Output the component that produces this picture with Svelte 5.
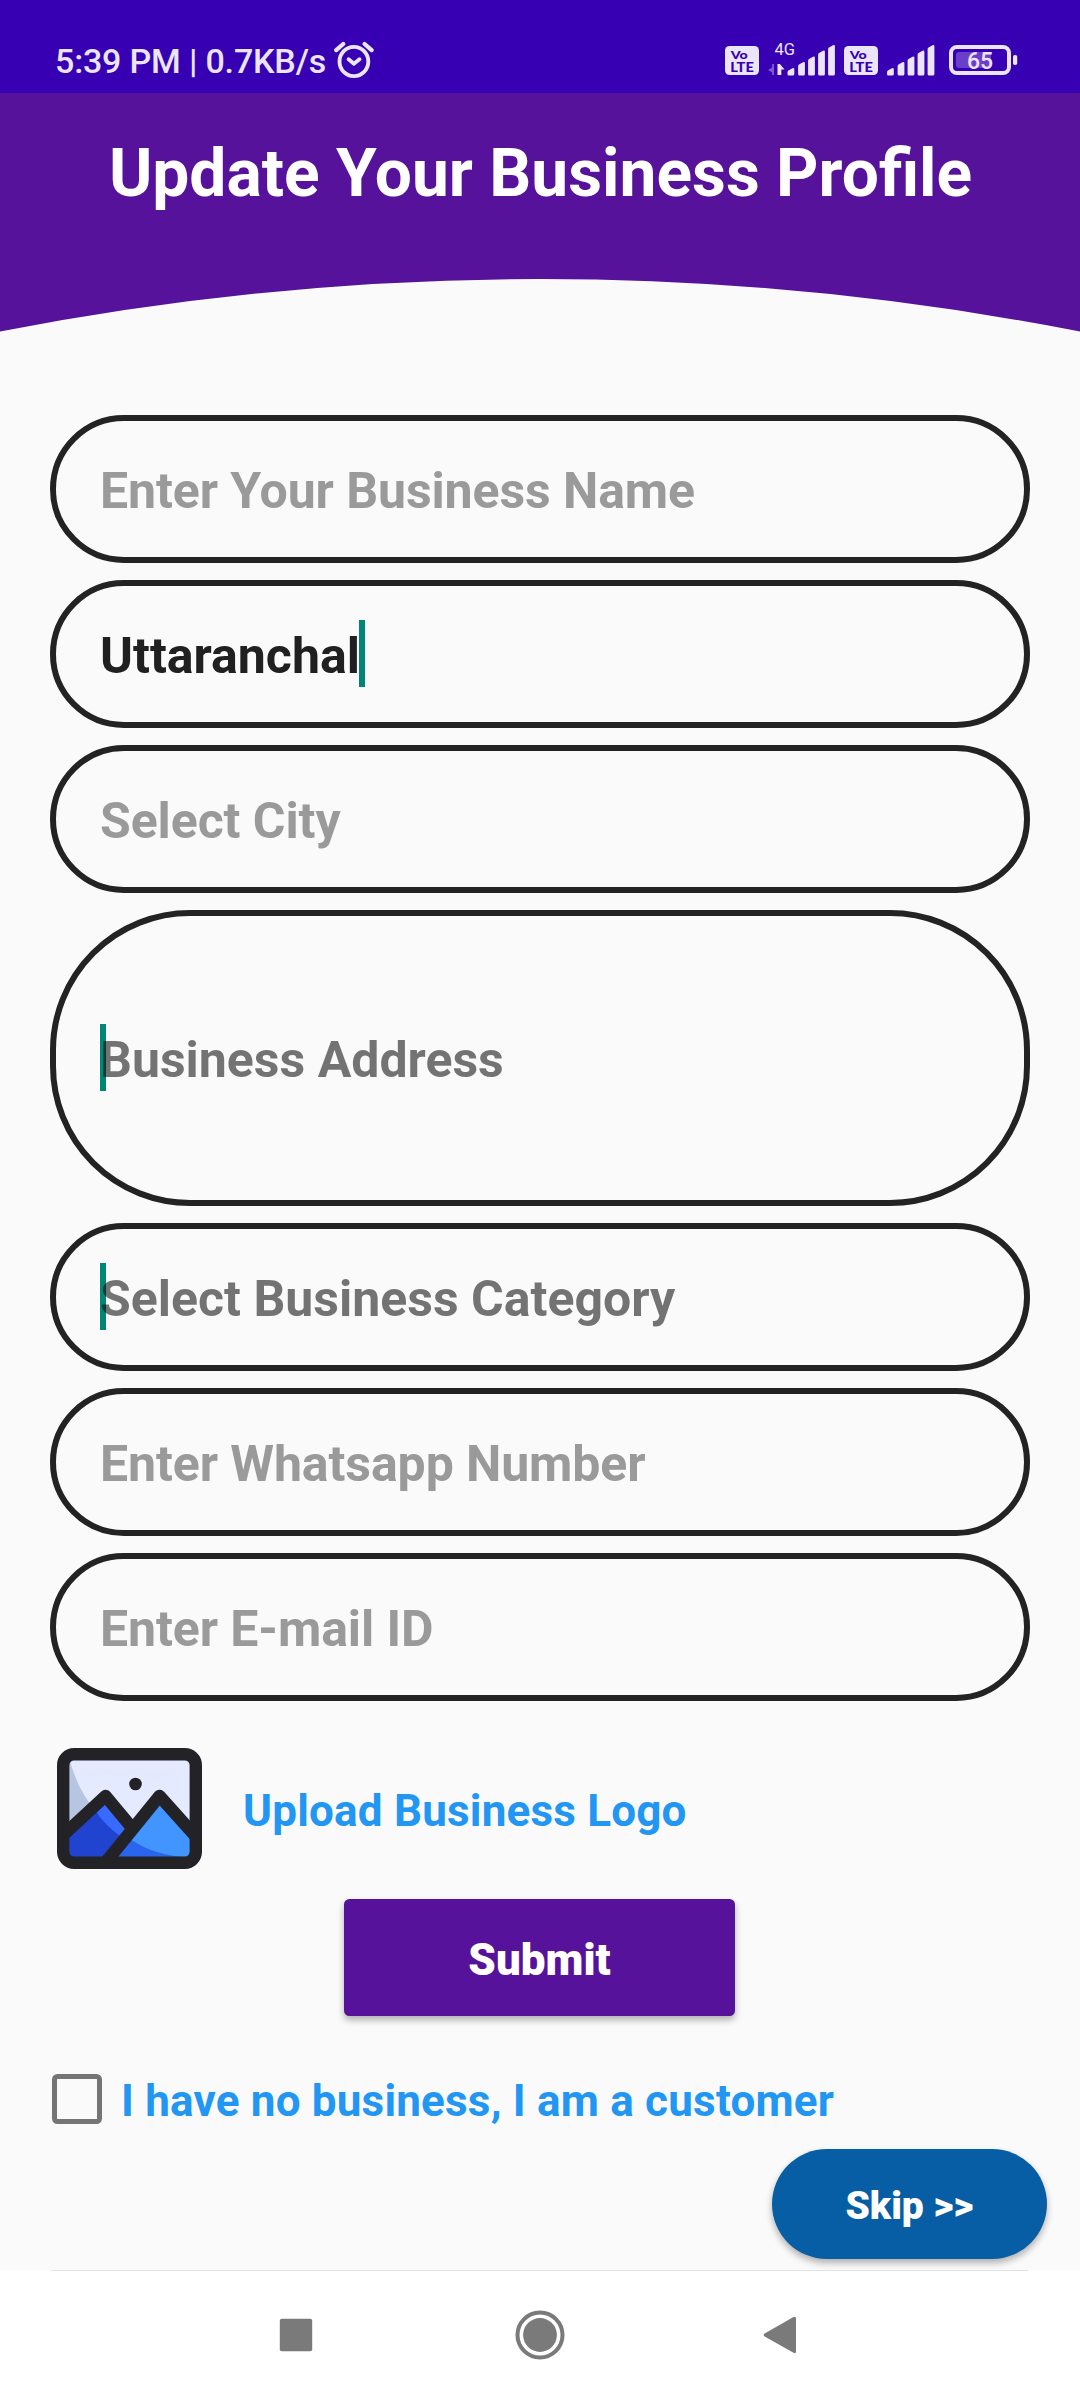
<script>
  const fields = [
    { text: 'Enter Your Business Name', tone: 'hint' },
    { text: 'Uttaranchal', tone: 'value', caret: 'end' },
    { text: 'Select City', tone: 'hint' },
    { text: 'Business Address', tone: 'dark-hint', caret: 'start', tall: true },
    { text: 'Select Business Category', tone: 'dark-hint', caret: 'start' },
    { text: 'Enter Whatsapp Number', tone: 'hint' },
    { text: 'Enter E-mail ID', tone: 'hint' }
  ];
  const barTops = [24, 18, 12.5, 6.5, 1];
  const barLefts = [0, 10.6, 20.6, 30.6, 40.6];
</script>

{#snippet volte()}
  <svg class="volte" width="34" height="29" viewBox="0 0 34 29">
    <rect width="34" height="29" rx="4.5" fill="#ebe5f9" />
    <text x="5.8" y="12.8" textLength="17" lengthAdjust="spacingAndGlyphs" class="vo">Vo</text>
    <text x="5.2" y="25.6" textLength="23.6" lengthAdjust="spacingAndGlyphs" class="lte">LTE</text>
  </svg>
{/snippet}

{#snippet bars()}
  {#each barTops as top, i}
    <path
      d="M{barLefts[i]} {top + 4.2}q0-1 .9-1.6l4-2.3q1.9-.7 1.9 1V30q0 1.5-1.5 1.5h-3.8q-1.5 0-1.5-1.5z"
      fill="#ebe5f9"
    />
  {/each}
{/snippet}

<div class="screen">
  <div class="status">
    <span class="clock">5:39 PM | 0.7KB/s</span>
    <svg class="alarm" width="40" height="38" viewBox="0 0 40 38" fill="none" stroke="#ebe5f9" stroke-linecap="round">
      <ellipse cx="19.9" cy="20.5" rx="14.4" ry="14.6" stroke-width="3.9" />
      <path d="M2.2 9.1 9.2 3M30.6 3l7 6.1" stroke-width="4.2" />
      <path d="m14.6 18.2 5.3 4.6 5.6-4.6" stroke-width="3.8" stroke-linejoin="round" />
    </svg>
    <div class="indicators">
      {@render volte()}
      <svg class="signal one" width="67" height="33" viewBox="0 0 67 33">
        <text x="6.6" y="11.3" class="net">4G</text>
        <path d="M6 20V31H4.1V28.6L0 26 4.1 23.6V20Z" fill="#8058d3" />
        <path d="M9.5 20h2.4l4.6 5.4h-3.2V31H9.5z" fill="#ebe5f9" />
        <g transform="translate(19.5 0)">{@render bars()}</g>
      </svg>
      {@render volte()}
      <svg class="signal two" width="48" height="33" viewBox="0 0 48 33">{@render bars()}</svg>
      <svg class="battery" width="69" height="30" viewBox="0 0 69 30">
        <rect x="7" y="7" width="35" height="16" rx="3" fill="#6c3fca" />
        <rect x="2" y="2" width="58" height="26" rx="6" fill="none" stroke="#ebe5f9" stroke-width="4" />
        <rect x="64" y="10" width="4.2" height="10" rx="1.8" fill="#ebe5f9" />
        <text x="31" y="24" text-anchor="middle" class="pct">65</text>
      </svg>
    </div>
  </div>

  <header><h1>Update Your Business Profile</h1></header>

  <main>
    <div class="fields">
      {#each fields as f}
        <div class="field" class:tall={f.tall}>
          <span class="entry {f.tone} {f.caret ? 'caret-' + f.caret : ''}">{f.text}</span>
        </div>
      {/each}
    </div>

    <div class="upload">
      <svg width="145" height="121" viewBox="0 0 145 121">
        <defs>
          <clipPath id="photo"><rect x="6" y="6" width="133" height="109" rx="10" /></clipPath>
        </defs>
        <g clip-path="url(#photo)">
          <rect width="145" height="121" fill="#e4eaff" />
          <path d="M0 0H10Q16 34 36 60L10 84H0Z" fill="#b6c5e1" />
          <path d="M0 98 48 50 70 84 48 114H0Z" fill="#2044d0" />
          <path d="M36 61 48 48 74 80 66 90Q48 78 38 62Z" fill="#386aff" />
          <path d="M54 115 102 50 145 98V115Z" fill="#4294ff" />
          <path d="M54 115 73 91Q98 108 130 109V115Z" fill="#2a65ed" />
        </g>
        <g fill="none" stroke="#232327" stroke-width="12.4" stroke-linejoin="round">
          <path d="M2 91 48.5 48 76 81" />
          <path d="M49 114 102.5 48 142 92" />
          <rect x="6.2" y="6.2" width="132.6" height="108.6" rx="11" />
        </g>
        <circle cx="78.5" cy="36" r="6.3" fill="#232327" />
      </svg>
      <span class="link">Upload Business Logo</span>
    </div>

    <button class="submit">Submit</button>

    <div class="check">
      <span class="box"></span>
      <span class="link">I have no business, I am a customer</span>
    </div>

    <button class="skip">Skip &gt;&gt;</button>
  </main>

  <nav>
    <svg width="34" height="34" viewBox="0 0 34 34"><rect x=".8" y=".8" width="32.4" height="32.4" rx="2" /></svg>
    <svg class="home" width="50" height="50" viewBox="0 0 50 50">
      <circle cx="25" cy="25" r="22.5" fill="none" stroke="#7a7a7a" stroke-width="4" />
      <circle cx="25" cy="25" r="16.9" />
    </svg>
    <svg width="34" height="38" viewBox="0 0 34 38">
      <path d="M1.2 17.8 30.5 1Q33 0 33 2.4V35.4Q33 38 30.5 36.8L1.2 20.2Q0 19 1.2 17.8Z" />
    </svg>
  </nav>
</div>

<style>
  :global(body) {
    margin: 0;
    background: #fafafa;
  }
  .screen {
    width: 1080px;
    height: 2400px;
    display: flex;
    flex-direction: column;
    background: #fafafa;
    font-family: Roboto, sans-serif;
    overflow: hidden;
  }
  .status {
    box-sizing: border-box;
    flex: none;
    height: 93px;
    padding: 30px 62px 0 55px;
    display: flex;
    align-items: flex-start;
    background: #3700b3;
    color: #ebe5f9;
  }
  .clock {
    font-size: 34px;
    font-weight: 500;
    line-height: 63px;
    letter-spacing: -0.17px;
    white-space: pre;
    width: 272px;
  }
  .alarm {
    margin: 11px 0 0 7px;
  }
  .indicators {
    margin-left: auto;
    display: flex;
    align-items: flex-start;
  }
  .volte {
    margin-top: 16px;
  }
  .vo,
  .lte {
    font-family: Lato, sans-serif;
    font-weight: 900;
    fill: #3700b3;
  }
  .vo {
    font-size: 12px;
  }
  .lte {
    font-size: 13.5px;
  }
  .signal {
    margin-top: 14px;
    overflow: visible;
  }
  .one {
    margin: 14px 9px 0;
  }
  .two {
    margin: 14px 14px 0 9.5px;
  }
  .net {
    font-size: 16.5px;
    fill: #ebe5f9;
  }
  .battery {
    margin-top: 15px;
  }
  .pct {
    font-size: 23px;
    font-weight: 500;
    fill: #ebe5f9;
  }
  header {
    flex: none;
    height: 239px;
    background: #56129a;
    clip-path: path('M0 0H1080V238.5Q540 133.5 0 238.5Z');
  }
  h1 {
    margin: 0;
    padding: 40px 0 0 1px;
    font-size: 65.9px;
    font-weight: 700;
    line-height: 81px;
    text-align: center;
    color: #fff;
    white-space: nowrap;
  }
  main {
    flex: 1;
    padding: 83px 50px 0;
    display: flex;
    flex-direction: column;
  }
  .fields {
    display: flex;
    flex-direction: column;
    gap: 17px;
  }
  .field {
    box-sizing: border-box;
    height: 148px;
    border: 6px solid #232323;
    border-radius: 74px;
    padding: 4px 44px 0;
    display: flex;
    align-items: center;
  }
  .tall {
    height: 296px;
    border-radius: 140px;
  }
  .entry {
    position: relative;
    font-size: 50px;
    font-weight: 700;
    line-height: 60px;
    white-space: nowrap;
  }
  .hint {
    color: #9a9a9a;
    letter-spacing: -0.09px;
  }
  .value {
    color: #202020;
  }
  .dark-hint {
    color: rgba(0, 0, 0, 0.54);
  }
  .caret-start::before,
  .caret-end::after {
    content: '';
    position: absolute;
    top: -6px;
    width: 6px;
    height: 67px;
    background: #008577;
  }
  .caret-start::before {
    left: 0;
    z-index: -1;
  }
  .caret-start {
    z-index: 0;
  }
  .caret-end::after {
    left: 259px;
  }
  .upload {
    margin: 47px 0 0 7px;
    display: flex;
    align-items: center;
    gap: 41px;
  }
  .link {
    font-size: 44px;
    font-weight: 700;
    line-height: 54px;
    letter-spacing: 0.2px;
    color: #2296f3;
    white-space: nowrap;
  }
  .upload .link {
    padding-top: 5px;
  }
  button {
    border: 0;
    color: #fff;
    font-family: inherit;
    font-weight: 900;
    white-space: nowrap;
  }
  .submit {
    margin: 30px 0 0 294px;
    width: 391px;
    height: 117px;
    padding: 4px 0 0;
    border-radius: 5.5px;
    background: #56129a;
    font-size: 44px;
    box-shadow: 0 4px 7px rgba(0, 0, 0, 0.3);
  }
  .check {
    margin: 58px 0 0 2px;
    height: 50px;
    display: flex;
    align-items: center;
    gap: 19px;
  }
  .check .link {
    padding-top: 4px;
  }
  .box {
    box-sizing: border-box;
    width: 50px;
    height: 50px;
    border: 5.5px solid #757575;
    border-radius: 5.5px;
  }
  .skip {
    margin: 25px 0 0 722px;
    width: 275px;
    height: 110px;
    padding: 3px 0 0;
    border-radius: 55px;
    background: #085ea4;
    font-size: 39px;
    box-shadow: 0 4px 7px rgba(0, 0, 0, 0.3);
  }
  nav {
    flex: none;
    height: 130px;
    box-sizing: border-box;
    padding: 0 283px 0 279px;
    display: flex;
    align-items: center;
    justify-content: space-between;
    background:
      linear-gradient(#e3e3e3, #e3e3e3) 51px 0 / 977px 1px no-repeat,
      #fff;
    fill: #7a7a7a;
  }
  .home {
    margin-left: 4px;
  }
</style>
